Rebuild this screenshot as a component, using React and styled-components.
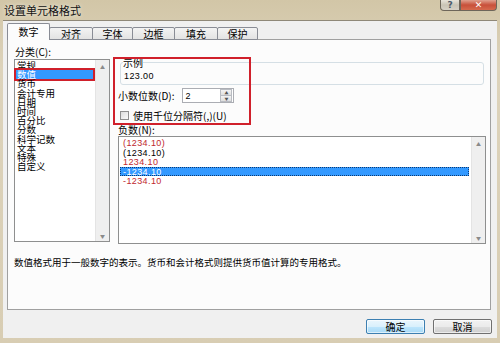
import React from 'react';
import styled, { createGlobalStyle } from 'styled-components';

const GlobalStyle = createGlobalStyle`
  body {
    margin: 0;
    font-family: "Noto Sans CJK SC", "Noto Sans", sans-serif;
    color: #000;
  }
`;

const categories = ['常规', '数值', '货币', '会计专用', '日期', '时间', '百分比', '分数', '科学记数', '文本', '特殊', '自定义'];

const negatives = [
  { text: '(1234.10)', red: true },
  { text: '(1234.10)', red: false },
  { text: '1234.10', red: true },
  { text: '-1234.10', red: false, selected: true },
  { text: '-1234.10', red: true },
];

const tabs = [
  { label: '数字', w: 43 },
  { label: '对齐', w: 44 },
  { label: '字体', w: 41 },
  { label: '边框', w: 43 },
  { label: '填充', w: 44 },
  { label: '保护', w: 41 },
];

const Window = styled.div`
  width: 500px;
  height: 343px;
  background: linear-gradient(#d2c6a7 0%, #ddd3bb 20%, #d8cdb3 100%);
  display: flex;
  flex-direction: column;
  overflow: hidden;
`;

const TitleBar = styled.div`
  height: 20px;
  flex: none;
  display: flex;
  justify-content: space-between;
  padding: 0 3px 0 4px;
  box-sizing: border-box;
`;

const Title = styled.div`
  font-size: 11px;
  line-height: 20px;
  color: #111;
  text-shadow: 0 0 4px rgba(255, 255, 255, 0.8);
`;

const Controls = styled.div`
  display: flex;
  align-items: flex-start;
`;

const CtrlButton = styled.div`
  width: ${(p) => p.w}px;
  height: 11px;
  border: 1px solid #6e665a;
  border-top: none;
  box-sizing: border-box;
  display: flex;
  align-items: center;
  justify-content: center;
  font: bold 9px "DejaVu Sans", sans-serif;
  color: ${(p) => (p.close ? '#fff' : '#4a5a6a')};
  background: ${(p) =>
    p.close
      ? 'linear-gradient(#e0a18f, #c8503a 50%, #d66a4e)'
      : 'linear-gradient(#e8e4da, #c9c3b5 50%, #d6d1c6)'};
  border-radius: ${(p) => (p.close ? '0 0 4px 0' : '0 0 0 4px')};
`;

const Body = styled.div`
  flex: 1;
  margin: 0 3px 5px 3px;
  background: #f0f0f0;
  border-top: 1px solid #8f8878;
  display: flex;
  flex-direction: column;
  padding: 3px 6px 0 4px;
`;

const TabRow = styled.div`
  height: 16px;
  display: flex;
  align-items: flex-end;
  position: relative;
  z-index: 1;
  margin-bottom: -1px;
`;

const Tab = styled.div`
  width: ${(p) => p.w}px;
  height: ${(p) => (p.active ? 17 : 13)}px;
  box-sizing: border-box;
  border: 1px solid #898c95;
  border-bottom: ${(p) => (p.active ? 'none' : '1px solid #898c95')};
  margin-left: ${(p) => (p.first ? 0 : -1)}px;
  border-radius: 2px 2px 0 0;
  background: ${(p) => (p.active ? '#fcfcfc' : 'linear-gradient(#f3f3f3, #e3e3e3)')};
  font-size: 10px;
  line-height: ${(p) => (p.active ? 15 : 11)}px;
  text-align: center;
`;

const Panel = styled.div`
  height: 271px;
  box-sizing: border-box;
  border: 1px solid #a0a0a0;
  background: #fcfcfc;
  padding: 6px 4px 0 6px;
  display: flex;
  flex-direction: column;
`;

const Top = styled.div`
  display: grid;
  grid-template-columns: 96px 1fr;
  column-gap: 3px;
`;

const LeftCol = styled.div`
  display: flex;
  flex-direction: column;
`;

const Label = styled.div`
  font-size: 10px;
  line-height: 11px;
  margin-left: ${(p) => p.indent || 0}px;
  white-space: nowrap;
`;

const ListBox = styled.div`
  height: ${(p) => p.h}px;
  margin-top: ${(p) => p.mt || 0}px;
  margin-left: ${(p) => p.ml || 0}px;
  box-sizing: border-box;
  border: 1px solid #8e8f8f;
  background: #fff;
  display: flex;
`;

const Items = styled.div`
  flex: 1;
  padding: ${(p) => p.pad};
  display: flex;
  flex-direction: column;
`;

const CatItem = styled.div`
  font-size: 9.5px;
  line-height: 9.2px;
  height: 9.2px;
  padding-left: 1px;
  white-space: nowrap;
  background: ${(p) => (p.selected ? '#3399ff' : 'transparent')};
  color: ${(p) => (p.selected ? '#fff' : '#000')};
  box-shadow: ${(p) => (p.selected ? '0 0 0 2px #d0202b' : 'none')};
  position: relative;
`;

const NegItem = styled.div`
  font-family: "Liberation Sans", Arial, sans-serif;
  font-size: 9px;
  letter-spacing: 0.4px;
  line-height: 8.5px;
  height: 9.5px;
  box-sizing: border-box;
  padding-left: 2px;
  margin-right: 1px;
  color: ${(p) => (p.selected ? '#fff' : p.red ? '#c0282e' : '#000')};
  background: ${(p) => (p.selected ? '#3399ff' : 'transparent')};
  border: 1px dotted ${(p) => (p.selected ? '#0b3a73' : 'transparent')};
`;

const ScrollBar = styled.div`
  width: 13px;
  flex: none;
  background: #efefef;
  border-left: 1px solid #e4e4e4;
  display: flex;
  flex-direction: column;
  justify-content: space-between;
`;

const Arrow = styled.div`
  height: 12px;
  display: flex;
  align-items: center;
  justify-content: center;
  font-size: 5px;
  color: #8a8a8a;
`;

const RightCol = styled.div`
  position: relative;
  display: flex;
  flex-direction: column;
`;

const Sample = styled.fieldset`
  margin: 11px 2px 0 7px;
  padding: 0 0 0 3px;
  height: 28px;
  box-sizing: border-box;
  border: 1px solid #d5dfe5;
  border-radius: 3px;
`;

const Legend = styled.legend`
  font-size: 10px;
  line-height: 11px;
  padding: 0;
  margin-left: -1px;
`;

const SampleValue = styled.div`
  font-family: "Liberation Sans", Arial, sans-serif;
  font-size: 9px;
  letter-spacing: 0.4px;
  line-height: 10px;
  margin-top: 3px;
`;

const Row = styled.div`
  display: flex;
  align-items: center;
  margin: ${(p) => p.m};
  height: ${(p) => p.h}px;
`;

const Spinner = styled.div`
  width: 52px;
  height: 15px;
  margin-left: 8px;
  box-sizing: border-box;
  border: 1px solid #abadb3;
  background: #fff;
  display: flex;
  align-items: center;
`;

const SpinValue = styled.div`
  flex: 1;
  font-family: "Liberation Sans", Arial, sans-serif;
  font-size: 9px;
  padding-left: 2px;
`;

const SpinButtons = styled.div`
  width: 12px;
  height: 13px;
  margin-right: 1px;
  display: flex;
  flex-direction: column;
`;

const SpinHalf = styled.div`
  flex: 1;
  border: 1px solid #b9bcc2;
  margin-top: ${(p) => (p.bottom ? -1 : 0)}px;
  background: linear-gradient(#f4f4f4, #dedede);
  display: flex;
  align-items: center;
  justify-content: center;
  font-size: 4px;
  color: #555;
  line-height: 1;
`;

const Check = styled.div`
  width: 9px;
  height: 9px;
  box-sizing: border-box;
  border: 1px solid #8f8f8f;
  background: linear-gradient(135deg, #dcdcdc, #fafafa);
  margin: 0 4px 0 2px;
`;

const Highlight = styled.div`
  position: absolute;
  left: 0;
  top: 11px;
  width: 138px;
  height: 68px;
  box-sizing: border-box;
  border: 2px solid #d0202b;
  pointer-events: none;
`;

const Description = styled.div`
  font-size: 9.5px;
  line-height: 12px;
  margin-top: 12px;
  white-space: nowrap;
`;

const ButtonRow = styled.div`
  display: flex;
  justify-content: flex-end;
  gap: 8px;
  margin: 9px -1px 0 0;
`;

const Button = styled.div`
  width: 59px;
  height: 15px;
  box-sizing: border-box;
  border: 1px solid ${(p) => (p.primary ? '#3c7fb1' : '#707070')};
  border-radius: 2px;
  background: ${(p) =>
    p.primary
      ? 'linear-gradient(#eaf6fd 0%, #d9f0fc 50%, #bee6fd 51%, #a7d9f5 100%)'
      : 'linear-gradient(#f2f2f2 0%, #ebebeb 50%, #dddddd 51%, #cfcfcf 100%)'};
  box-shadow: inset 0 0 0 1px rgba(255, 255, 255, 0.6);
  font-size: 10px;
  line-height: 13px;
  text-align: center;
`;

export default function App() {
  return (
    <>
      <GlobalStyle />
      <Window>
        <TitleBar>
          <Title>设置单元格格式</Title>
          <Controls>
            <CtrlButton w={20}>?</CtrlButton>
            <CtrlButton w={37} close>✕</CtrlButton>
          </Controls>
        </TitleBar>
        <Body>
          <TabRow>
            {tabs.map((t, i) => (
              <Tab key={t.label} w={t.w} active={i === 0} first={i === 0}>
                {t.label}
              </Tab>
            ))}
          </TabRow>
          <Panel>
            <Top>
              <LeftCol>
                <Label indent={1}>分类(C):</Label>
                <ListBox h={183} mt={2}>
                  <Items pad="1px 2px 0 1px">
                    {categories.map((c) => (
                      <CatItem key={c} selected={c === '数值'}>{c}</CatItem>
                    ))}
                  </Items>
                  <ScrollBar>
                    <Arrow>▲</Arrow>
                    <Arrow>▼</Arrow>
                  </ScrollBar>
                </ListBox>
              </LeftCol>
              <RightCol>
                <Sample>
                  <Legend>示例</Legend>
                  <SampleValue>123.00</SampleValue>
                </Sample>
                <Row m="3px 0 0 5px" h={15}>
                  <Label>小数位数(D):</Label>
                  <Spinner>
                    <SpinValue>2</SpinValue>
                    <SpinButtons>
                      <SpinHalf>▲</SpinHalf>
                      <SpinHalf bottom>▼</SpinHalf>
                    </SpinButtons>
                  </Spinner>
                </Row>
                <Row m="5px 0 0 5px" h={14}>
                  <Check />
                  <Label>使用千位分隔符(,)(U)</Label>
                </Row>
                <Row m="2px 0 0 5px" h={11}>
                  <Label>负数(N):</Label>
                </Row>
                <ListBox h={108} mt={1} ml={5}>
                  <Items pad="1px 1px 0 1px">
                    {negatives.map((n, i) => (
                      <NegItem key={i} red={n.red} selected={n.selected}>{n.text}</NegItem>
                    ))}
                  </Items>
                  <ScrollBar>
                    <Arrow>▲</Arrow>
                    <Arrow>▼</Arrow>
                  </ScrollBar>
                </ListBox>
                <Highlight />
              </RightCol>
            </Top>
            <Description>数值格式用于一般数字的表示。货币和会计格式则提供货币值计算的专用格式。</Description>
          </Panel>
          <ButtonRow>
            <Button primary>确定</Button>
            <Button>取消</Button>
          </ButtonRow>
        </Body>
      </Window>
    </>
  );
}
